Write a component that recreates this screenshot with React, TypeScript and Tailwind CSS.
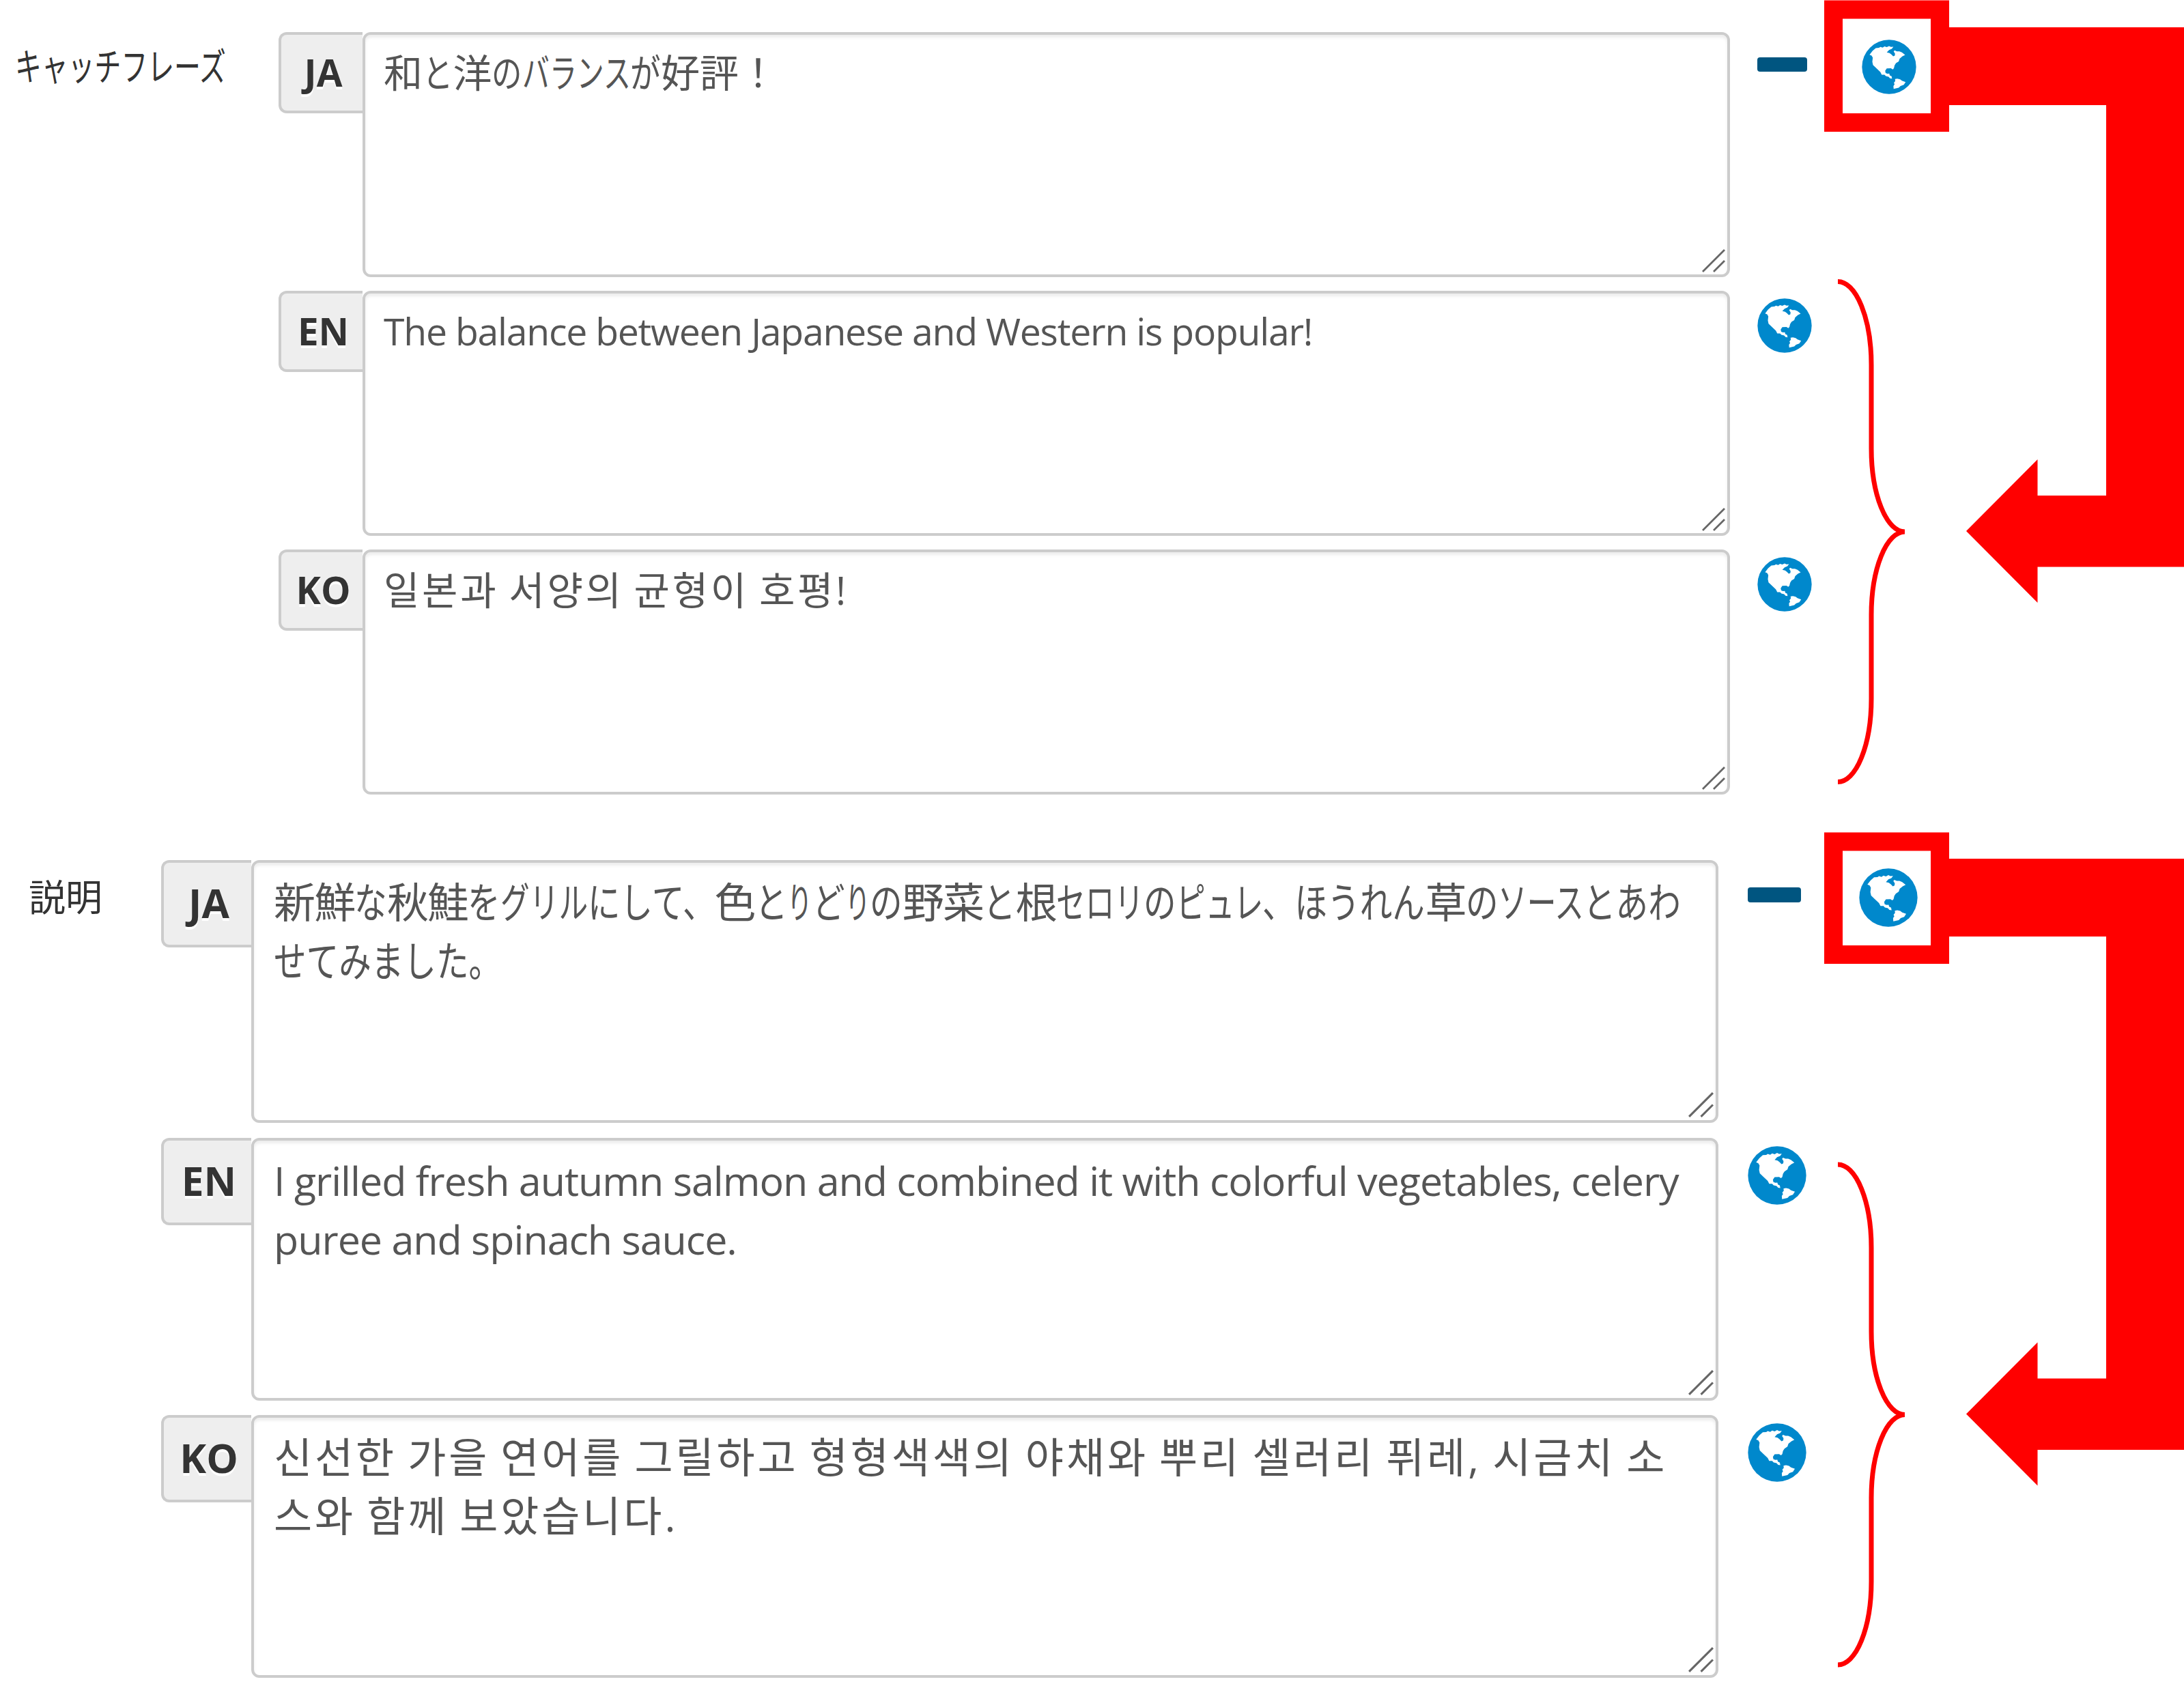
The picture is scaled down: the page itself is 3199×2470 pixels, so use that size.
import React from 'react';
import clsx from 'clsx';

type Lang = 'JA' | 'EN' | 'KO';

interface Translation {
  lang: Lang;
  lines: string[];
}

interface FieldProps {
  label: string;
  large?: boolean;
  translations: Translation[];
}

const catchphrase: Translation[] = [
  { lang: 'JA', lines: ['和と洋のバランスが好評！'] },
  { lang: 'EN', lines: ['The balance between Japanese and Western is popular!'] },
  { lang: 'KO', lines: ['일본과 서양의 균형이 호평!'] },
];

const description: Translation[] = [
  {
    lang: 'JA',
    lines: [
      '新鮮な秋鮭をグリルにして、色とりどりの野菜と根セロリのピュレ、ほうれん草のソースとあわ',
      'せてみました。',
    ],
  },
  {
    lang: 'EN',
    lines: [
      'I grilled fresh autumn salmon and combined it with colorful vegetables, celery',
      'puree and spinach sauce.',
    ],
  },
  {
    lang: 'KO',
    lines: [
      '신선한 가을 연어를 그릴하고 형형색색의 야채와 뿌리 셀러리 퓌레, 시금치 소',
      '스와 함께 보았습니다.',
    ],
  },
];

const kanaStyles = [
  { test: /^り/, width: 0.6, scale: 'scale-x-[0.6]' },
  { test: /^[\u30a0-\u30ff]/, width: 0.7, scale: 'scale-x-[0.7]' },
  { test: /^[\u3001-\u309f]/, width: 0.78, scale: 'scale-x-[0.78]' },
];

function Japanese({ text }: { text: string }) {
  const runs = text.match(/り+|[\u30a0-\u30ff]+|[、。ぁ-らるれろ-ん]+|[^\u3001-\u30ff]+/g) ?? [];
  return (
    <>
      {runs.map((run, i) => {
        const kana = kanaStyles.find((s) => s.test.test(run));
        if (!kana) {
          return <span key={i}>{run}</span>;
        }
        return (
          <span
            key={i}
            className={clsx('inline-block origin-left tracking-normal', kana.scale)}
            style={{ marginRight: `${-run.length * (1 - kana.width)}em` }}
          >
            {run}
          </span>
        );
      })}
    </>
  );
}

function Globe({ className }: { className?: string }) {
  return (
    <svg viewBox="-1 1 238 238" className={clsx('shrink-0', className)}>
      <circle cx="118" cy="120" r="118" fill="#0088cc" />
      <path
        fill="#fff"
        d="M33 67 L46 50 L60 38 L74 37 L80 33 L90 36 L98 31 L108 34 L118 29 L126 33 L137 32 L130 41 L118 46 L108 57 L120 60 L128 66 L136 74 L143 71 L144 62 L138 53 L142 48 L152 52 L163 52 L174 57 L188 68 L176 74 L164 84 L160 96 L148 104 L142 113 L139 126 L134 131 L126 126 L108 127 L101 137 L103 147 L111 150 L119 149 L121 157 L129 161 L131 171 L122 170 L116 163 L104 160 L98 154 L86 154 L80 142 L66 129 L48 112 L45 98 L47 80 L42 71 Z"
      />
      <path fill="#fff" d="M144 173 L154 171 L166 174 L174 180 L190 186 L182 198 L168 203 L160 211 L138 216 L137 203 L142 196 L139 189 L145 182 Z" />
    </svg>
  );
}

function ResizeHandle({ large }: { large?: boolean }) {
  return (
    <svg
      viewBox="0 0 34 34"
      className={clsx('absolute', large ? 'right-[3px] bottom-[4px] size-[37px]' : 'right-[3px] bottom-[3px] size-[34px]')}
    >
      <path d="M1 33 L33 1 M17 33 L33 17" stroke="#666" strokeWidth="2.8" />
    </svg>
  );
}

function TranslationRow({ lang, lines, large }: Translation & { large?: boolean }) {
  return (
    <div className="flex items-start">
      <div
        className={clsx(
          'shrink-0 rounded-l-[12px] border-4 border-r-0 border-[#ccc] bg-[#eee] pt-[15px] pl-[4px] text-center text-[0.96em] font-bold text-[#333] [text-shadow:0_4px_0_#fff]',
          large ? 'h-[128px] w-[132px]' : 'h-[119px] w-[123px]'
        )}
      >
        {lang}
      </div>
      <div
        className={clsx(
          'relative shrink-0 rounded-[12px] border-4 border-[#ccc] bg-white pt-[15px] whitespace-nowrap text-[#555] shadow-[inset_0_4px_4px_rgba(0,0,0,0.075)]',
          large ? 'h-[385px] w-[2149px] pl-[29px]' : 'h-[359px] w-[2003px] pl-[27px]',
          lang === 'JA' && large && 'tracking-[-0.03em]',
          lang === 'EN' && 'text-[0.97em]',
          lang === 'EN' && (large ? 'tracking-[-0.017em]' : 'tracking-[-0.022em]'),
          lang === 'KO' && 'tracking-[0.064em] [word-spacing:-0.06em]'
        )}
      >
        {lines.map((line) => (
          <p key={line}>{lang === 'JA' ? <Japanese text={line} /> : line}</p>
        ))}
        <ResizeHandle large={large} />
      </div>
      {lang === 'JA' && (
        <div
          className={clsx(
            'shrink-0 rounded-[4px] bg-[#005580]',
            large ? 'mt-[40px] mr-[85px] ml-[43px] h-[22px] w-[78px]' : 'mt-[37px] mr-[80px] ml-[40px] h-[21px] w-[73px]'
          )}
        />
      )}
      <Globe
        className={clsx(
          large ? 'mt-[12px] size-[86px]' : 'mt-[11px] size-[80px]',
          lang !== 'JA' && (large ? 'ml-[43px]' : 'ml-[40px]')
        )}
      />
    </div>
  );
}

// Red callout: box around the globe, arrow leading to the brace of translated rows
function Callout({ barTop, tipY }: { barTop: number; tipY: number }) {
  return (
    <svg width="527" height="1251" viewBox="2672 0 527 1251" className="absolute top-0 right-0">
      <rect x="2685.5" y="14" width="156" height="165.5" fill="none" stroke="#f00" strokeWidth="27" />
      <path
        fill="#f00"
        d={`M2854 ${barTop} H3199 V${tipY + 52.5} H2984.5 V${tipY + 105} L2880 ${tipY} L2984.5 ${tipY - 105} V${tipY - 52} H3085 V${barTop + 114} H2854 Z`}
      />
      <path
        transform={`translate(2692 ${tipY + 1})`}
        fill="none"
        stroke="#f00"
        strokeWidth="7"
        d="M0 -366.5 A49 122 0 0 1 49 -244.5 V-122 A49 122 0 0 0 98 0 A49 122 0 0 0 49 122 V244.5 A49 122 0 0 1 0 366.5"
      />
    </svg>
  );
}

function Field({ label, large, translations }: FieldProps) {
  return (
    <section className={clsx('flex items-start', large ? 'text-[61px] leading-[86px]' : 'text-[57px] leading-[80px]')}>
      <div
        className={clsx(
          'shrink-0 whitespace-nowrap text-[#333]',
          large ? 'w-[236px] pt-[11px] pl-[42px] text-[54px]' : 'w-[408px] pt-[10px] pl-[22px] text-[55.5px]'
        )}
      >
        <Japanese text={label} />
      </div>
      <div className={clsx('flex flex-col', large ? 'gap-[21.5px]' : 'gap-5')}>
        {translations.map((t) => (
          <TranslationRow key={t.lang} large={large} {...t} />
        ))}
      </div>
    </section>
  );
}

export default function App() {
  return (
    <main className="h-[2470px] w-[3199px] overflow-hidden bg-white font-['Open_Sans','Noto_Sans_CJK_JP','Noto_Sans_CJK_KR',sans-serif]">
      <div className="relative h-[1219px] pt-[47px]">
        <Field label="キャッチフレーズ" translations={catchphrase} />
        <Callout barTop={40} tipY={778} />
      </div>
      <div className="relative h-[1251px] pt-[41px]">
        <Field label="説明" large translations={description} />
        <Callout barTop={39} tipY={852.5} />
      </div>
    </main>
  );
}
